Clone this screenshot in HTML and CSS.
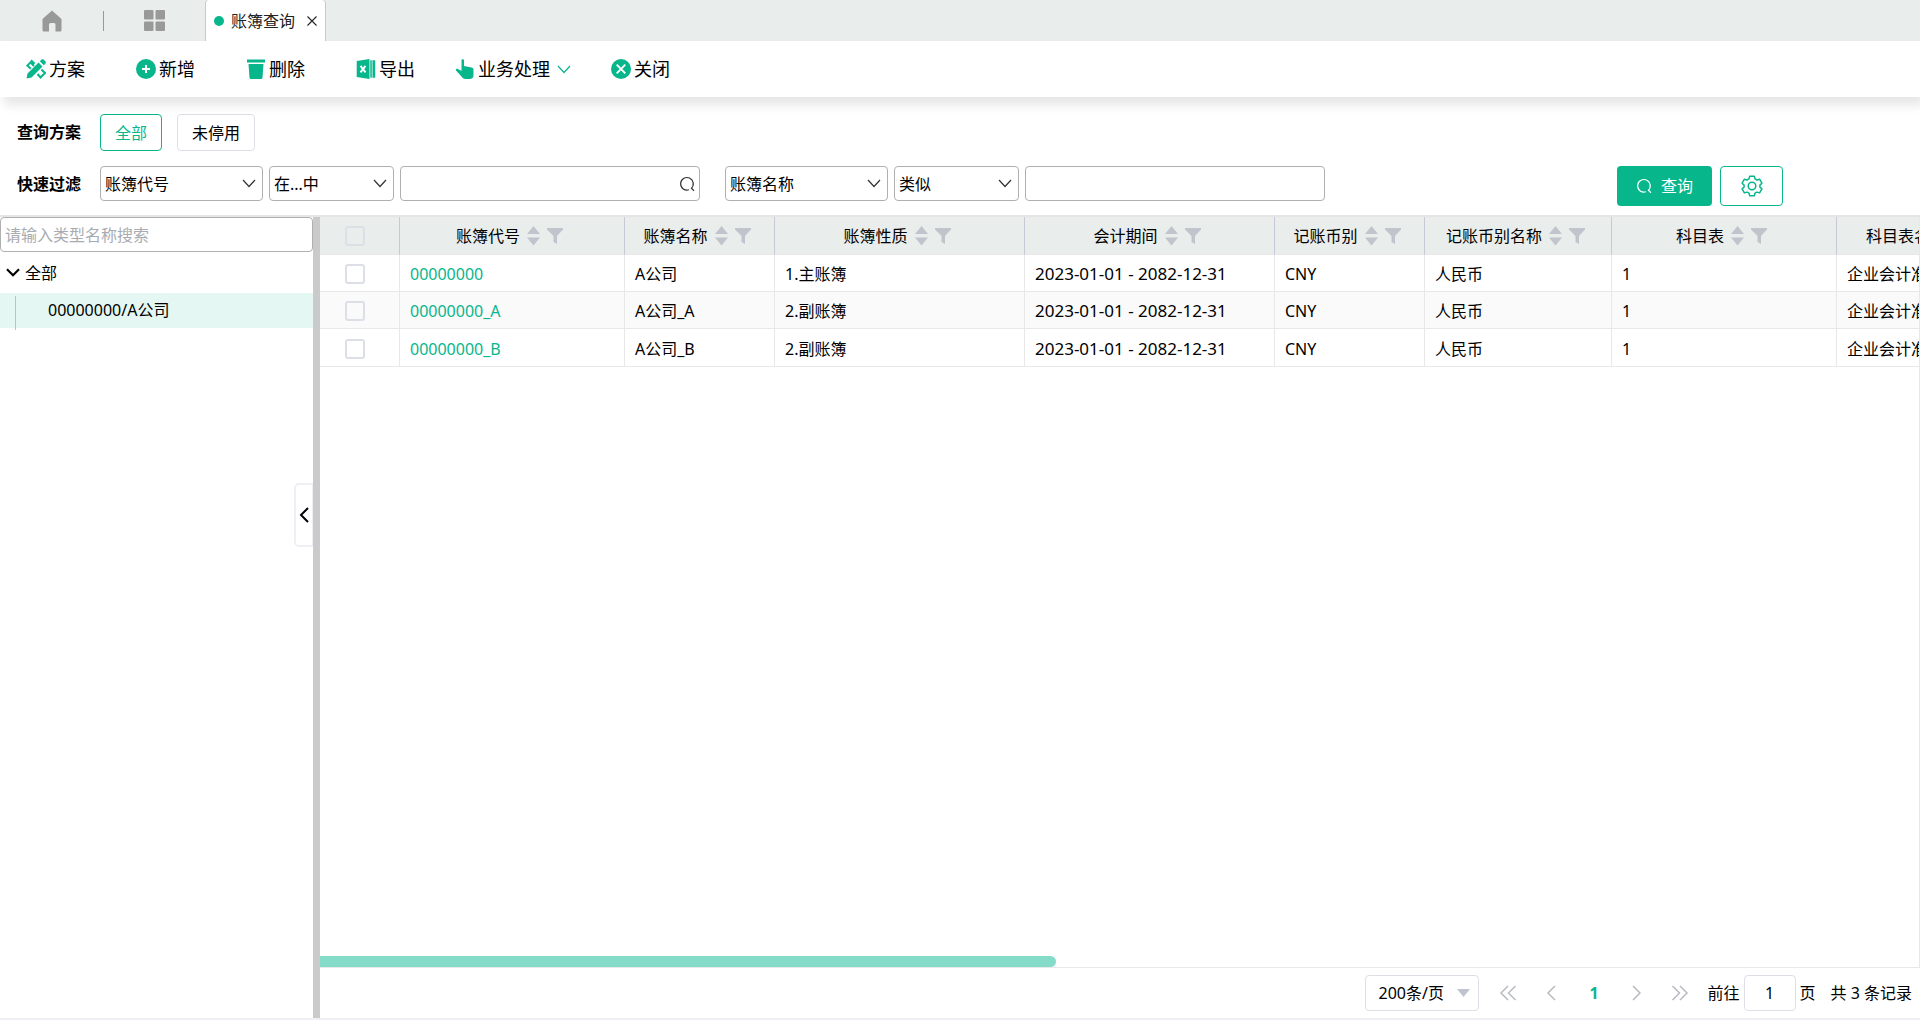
FILE: index.html
```html
<!DOCTYPE html>
<html lang="zh-CN">
<head>
<meta charset="utf-8">
<meta name="viewport" content="width=device-width, initial-scale=1">
<title>账簿查询</title>
<link rel="stylesheet" href="styles.css">
</head>
<body>
<svg class="defs" aria-hidden="true">
  <symbol id="chevron" viewBox="0 0 14 9"><path d="M1 1l6 6.5L13 1" fill="none" stroke="currentColor" stroke-width="1.2"/></symbol>
  <symbol id="search" viewBox="0 0 16 16"><path d="M10 13.8A6.3 6.3 0 1 1 12.4 12.300L15 14.800" fill="none" stroke="currentColor" stroke-width="1.2"/></symbol>
  <symbol id="sort" viewBox="0 0 13 20"><path d="M6.500 0L13 8H0zM0 11.500h13L6.500 19.500z" fill="currentColor"/></symbol>
  <symbol id="funnel" viewBox="0 0 16 16"><path d="M0 0h16v1.500L10 8v8L6.500 14V8L0 1.500z" fill="currentColor"/></symbol>
</svg>

<nav class="tabs">
  <a class="tabs__icon tabs__icon--home" href="#" aria-label="首页">
    <svg width="20" height="22" viewBox="0 0 20 22"><path d="M10 .5L19.500 9v11a1.500 1.500 0 0 1-1.500 1.500h-4.500V14.500a1.500 1.500 0 0 0-1.500-1.500H8.500a1.500 1.500 0 0 0-1.500 1.500v7H2A1.500 1.500 0 0 1 .5 20V9z" fill="#999"/></svg>
  </a>
  <span class="tabs__divider"></span>
  <a class="tabs__icon tabs__icon--grid" href="#" aria-label="应用">
    <svg width="21" height="21" viewBox="0 0 21 21" fill="#999"><rect width="9.500" height="9.500" rx="1"/><rect x="11.500" width="9.500" height="9.500" rx="1"/><rect y="11.500" width="9.500" height="9.500" rx="1"/><rect x="11.500" y="11.500" width="9.500" height="9.500" rx="1"/></svg>
  </a>
  <div class="tab">
    <span class="tab__dot"></span>
    <span class="tab__name">账簿查询</span>
    <button class="tab__close" type="button" aria-label="关闭标签">
      <svg width="10" height="10" viewBox="0 0 10 10"><path d="M.5.5l9 9m0-9l-9 9" stroke="#222" stroke-width="1.100"/></svg>
    </button>
  </div>
</nav>

<div class="toolbar">
  <button class="tool tool--wide" type="button">
    <svg width="20" height="20" viewBox="0 0 20 20">
      <path d="M8 7L4.800 3.600 6.500 1.500 1.300 6.600l3.500 3.200M11.500 15l3 3.500 4.500-4.500-3.600-3.500M5 1.200l3.500 3.500" fill="none" stroke="#08b68c" stroke-width="2"/>
      <path d="M.5 19.500l1-5L12.500 3.500l4 4L5.500 18.500zM13.800 2.300L15.500.6c.7-.6 1.500-.6 2 0l2 2c.5.500.5 1.300 0 1.800l-1.700 1.800z" fill="#08b68c"/>
    </svg>
    <span>方案</span>
  </button>
  <button class="tool tool--wide" type="button">
    <svg width="20" height="20" viewBox="0 0 20 20"><circle cx="10" cy="10" r="10" fill="#08b68c"/><path d="M10 6v8M6 10h8" stroke="#fff" stroke-width="2"/></svg>
    <span>新增</span>
  </button>
  <button class="tool tool--wide" type="button">
    <svg width="20" height="20" viewBox="0 0 20 20"><path d="M1 .5h18v3H1zM2.500 5h15l-1 13.500a1.500 1.500 0 0 1-1.500 1.500H5a1.500 1.500 0 0 1-1.500-1.500z" fill="#08b68c"/></svg>
    <span>删除</span>
  </button>
  <button class="tool" type="button">
    <svg width="20" height="20" viewBox="0 0 20 20"><path d="M.7 2L13.500 0v20L.7 18zM14.300 1.200h1.500v17.600h-1.500zM16.500 1.200h2.700v17.600h-2.700z" fill="#08b68c"/><path d="M4.500 6.800l5 6.500M9.500 6.800l-5 6.500" stroke="#fff" stroke-width="1.900"/></svg>
    <span>导出</span>
  </button>
  <button class="tool" type="button">
    <svg width="20" height="20" viewBox="0 0 20 20"><path d="M6.500 1.300C6.500-.2 9 -.2 9 1.300V7l7.500 1.500c1.300.3 2 1 2 2.200V16c0 2.500-1.500 4-4 4h-4c-2 0-3-1-4-2.500L1 11.500c-.5-1 .7-2.200 2-1.500l3.500 2z" fill="#08b68c"/></svg>
    <span>业务处理</span>
    <svg class="tool__arrow" width="14" height="9"><use href="#chevron"/></svg>
  </button>
  <button class="tool" type="button">
    <svg width="20" height="20" viewBox="0 0 20 20"><circle cx="10" cy="10" r="10" fill="#08b68c"/><path d="M5.700 5.700l8.600 8.600m0-8.600l-8.600 8.600" stroke="#fff" stroke-width="1.900"/></svg>
    <span>关闭</span>
  </button>
</div>

<form class="filters">
  <div class="filters__row">
    <span class="filters__label">查询方案</span>
    <button class="scheme scheme--active" type="button">全部</button>
    <button class="scheme" type="button">未停用</button>
  </div>
  <div class="filters__row">
    <span class="filters__label">快速过滤</span>
    <div class="group">
      <span class="picker picker--field"><select aria-label="过滤字段一"><option>账簿代号</option></select><svg width="14" height="9"><use href="#chevron"/></svg></span>
      <span class="picker picker--op"><select aria-label="过滤条件一"><option>在...中</option></select><svg width="14" height="9"><use href="#chevron"/></svg></span>
      <span class="picker picker--value"><input type="text" aria-label="账簿代号"><svg width="16" height="16"><use href="#search"/></svg></span>
    </div>
    <div class="group">
      <span class="picker picker--field"><select aria-label="过滤字段二"><option>账簿名称</option></select><svg width="14" height="9"><use href="#chevron"/></svg></span>
      <span class="picker picker--op"><select aria-label="过滤条件二"><option>类似</option></select><svg width="14" height="9"><use href="#chevron"/></svg></span>
      <span class="picker picker--value"><input type="text" aria-label="账簿名称"></span>
    </div>
    <div class="actions">
      <button class="btn btn--primary" type="button"><svg width="16" height="16"><use href="#search"/></svg><span>查询</span></button>
      <button class="btn btn--outline" type="button" aria-label="设置">
        <svg width="22" height="22" viewBox="0 0 22 22" fill="none" stroke="#08b68c" stroke-width="1.500" stroke-linejoin="round"><circle cx="11" cy="11" r="3.800"/><path d="M8.700 1.200h4.600l.7 2.700 1.900 1.100 2.700-.8 2.300 4-2 1.900v1.900l2 1.900-2.300 4-2.700-.8-1.900 1.100-.7 2.600H8.700L8 18.200l-1.900-1.100-2.700.8-2.300-4 2-1.900v-1.900l-2-1.900 2.300-4 2.700.8L8 3.900z"/></svg>
      </button>
    </div>
  </div>
</form>

<main class="workspace">
  <aside class="side">
    <input class="side__search" type="text" placeholder="请输入类型名称搜索" aria-label="请输入类型名称搜索">
    <div class="tree">
      <div class="tree__root">
        <svg width="14" height="9" viewBox="0 0 14 9"><path d="M1 1.200l6 6 6-6" fill="none" stroke="#000" stroke-width="2.200"/></svg>
        <span>全部</span>
      </div>
      <div class="tree__leaf">00000000/A公司</div>
    </div>
    <button class="side__fold" type="button" aria-label="收起">
      <svg width="10" height="16" viewBox="0 0 10 16"><path d="M9 1L2 8l7 7" fill="none" stroke="#000" stroke-width="2"/></svg>
    </button>
  </aside>
  <div class="splitter"></div>
  <section class="content">
    <div class="grid">
      <table class="table">
        <colgroup><col class="c80"><col class="c225"><col class="c150"><col class="c250"><col class="c250"><col class="c150"><col class="c187"><col class="c225"><col class="c187"></colgroup>
        <thead>
          <tr>
            <th><input class="check" type="checkbox" aria-label="全选"></th>
            <th><span class="head">账簿代号<svg width="13" height="20"><use href="#sort"/></svg><svg width="16" height="16"><use href="#funnel"/></svg></span></th>
            <th><span class="head">账簿名称<svg width="13" height="20"><use href="#sort"/></svg><svg width="16" height="16"><use href="#funnel"/></svg></span></th>
            <th><span class="head">账簿性质<svg width="13" height="20"><use href="#sort"/></svg><svg width="16" height="16"><use href="#funnel"/></svg></span></th>
            <th><span class="head">会计期间<svg width="13" height="20"><use href="#sort"/></svg><svg width="16" height="16"><use href="#funnel"/></svg></span></th>
            <th><span class="head">记账币别<svg width="13" height="20"><use href="#sort"/></svg><svg width="16" height="16"><use href="#funnel"/></svg></span></th>
            <th><span class="head">记账币别名称<svg width="13" height="20"><use href="#sort"/></svg><svg width="16" height="16"><use href="#funnel"/></svg></span></th>
            <th><span class="head">科目表<svg width="13" height="20"><use href="#sort"/></svg><svg width="16" height="16"><use href="#funnel"/></svg></span></th>
            <th><span class="head">科目表名称<svg width="13" height="20"><use href="#sort"/></svg><svg width="16" height="16"><use href="#funnel"/></svg></span></th>
          </tr>
        </thead>
        <tbody>
          <tr><td class="pick"><input class="check" type="checkbox" aria-label="选择 00000000"></td><td><a href="#">00000000</a></td><td>A公司</td><td>1.主账簿</td><td class="period">2023-01-01 - 2082-12-31</td><td>CNY</td><td>人民币</td><td>1</td><td>企业会计准则</td></tr>
          <tr><td class="pick"><input class="check" type="checkbox" aria-label="选择 00000000_A"></td><td><a href="#">00000000_A</a></td><td>A公司_A</td><td>2.副账簿</td><td class="period">2023-01-01 - 2082-12-31</td><td>CNY</td><td>人民币</td><td>1</td><td>企业会计准则</td></tr>
          <tr><td class="pick"><input class="check" type="checkbox" aria-label="选择 00000000_B"></td><td><a href="#">00000000_B</a></td><td>A公司_B</td><td>2.副账簿</td><td class="period">2023-01-01 - 2082-12-31</td><td>CNY</td><td>人民币</td><td>1</td><td>企业会计准则</td></tr>
        </tbody>
      </table>
      <div class="scroll"><div class="scroll__thumb"></div></div>
    </div>
    <div class="pager">
      <span class="pager__size"><select aria-label="每页条数"><option>200条/页</option></select><svg width="13" height="8" viewBox="0 0 13 8"><path d="M0 0h13L6.500 8z" fill="#c0c4cc"/></svg></span>
      <div class="pager__nav">
        <button type="button" aria-label="首页"><svg width="18" height="16" viewBox="0 0 18 16"><path d="M9 1L2 8l7 7M16.500 1l-7 7 7 7"/></svg></button>
        <button type="button" aria-label="上一页"><svg width="10" height="16" viewBox="0 0 10 16"><path d="M9 1L2 8l7 7"/></svg></button>
        <button class="pager__current" type="button">1</button>
        <button type="button" aria-label="下一页"><svg width="10" height="16" viewBox="0 0 10 16"><path d="M1 1l7 7-7 7"/></svg></button>
        <button type="button" aria-label="末页"><svg width="18" height="16" viewBox="0 0 18 16"><path d="M1.500 1l7 7-7 7M9 1l7 7-7 7"/></svg></button>
      </div>
      <label class="pager__jump">前往<input type="text" value="1" aria-label="页码">页</label>
      <span class="pager__total">共 3 条记录</span>
    </div>
  </section>
</main>
</body>
</html>
```

FILE: styles.css
```css
* { box-sizing: border-box; }

body {
  margin: 0;
  min-height: 100vh;
  display: flex;
  flex-direction: column;
  overflow-x: hidden;
  background: #fff;
  color: #000;
  font: 16px/24px "Noto Sans", "Noto Sans CJK SC", sans-serif;
}

button, input, select {
  margin: 0;
  font: inherit;
  color: inherit;
}

button {
  padding: 0;
  border: 0;
  background: none;
  cursor: pointer;
}

svg { display: block; flex: none; }
.defs { display: none; }

/* Tab strip */
.tabs {
  display: flex;
  align-items: stretch;
  height: 41px;
  background: #e9edec;
}
.tabs__icon { display: flex; align-items: center; justify-content: center; width: 103px; }
.tabs__icon--grid { width: 101px; }
.tabs__divider { width: 1px; height: 20px; align-self: center; background: #999; }

.tab {
  display: flex;
  align-items: center;
  padding: 0 8px;
  border: solid #c4c9c8;
  border-width: 0 1px;
  border-radius: 4px 4px 0 0;
  background: #fff;
}
.tab__dot { width: 10px; height: 10px; margin-right: 7px; border-radius: 50%; background: #08b68c; }
.tab__name { color: #222; }
.tab__close { margin-left: 12px; }

/* Toolbar */
.toolbar {
  position: relative;
  display: flex;
  gap: 40px;
  height: 56px;
  margin-bottom: -1px;
  padding: 0 26px;
  box-shadow: 4px 8px 10px rgba(0, 0, 0, .1);
}
.tool { display: flex; align-items: center; gap: 3px; font-size: 18px; }
.tool--wide { min-width: 70px; }
.tool__arrow { margin-left: 4px; color: #08b68c; }

/* Filters */
.filters {
  display: flex;
  flex-direction: column;
  gap: 15px;
  padding: 18px 137px 9px 17px;
  border-bottom: 2px solid #e5e5e5;
}
.filters__row { display: flex; align-items: flex-start; }
.filters__label { width: 83px; line-height: 37px; font-weight: 700; }

.scheme {
  height: 37px;
  margin-right: 15px;
  padding: 0 14px;
  border: 1px solid #dcdfe6;
  border-radius: 4px;
}
.scheme--active { border-color: #08b68c; color: #08b68c; }

.group { display: flex; gap: 6px; margin-right: 25px; }
.picker { display: grid; align-items: center; }
.picker > * { grid-area: 1 / 1; }
.picker > svg { justify-self: end; margin-right: 7px; color: #333; pointer-events: none; }
.picker--field { width: 163px; }
.picker--op { width: 125px; }
.picker--value { width: 300px; }
.picker--value > svg { margin-right: 5px; }

.picker select, .picker input, .side__search {
  width: 100%;
  height: 35px;
  padding: 0 4px;
  border: 1px solid #b0b0b0;
  border-radius: 4px;
  background: #fff;
  appearance: none;
}

.actions { display: flex; gap: 8px; margin-left: auto; }
.btn { display: flex; align-items: center; justify-content: center; height: 40px; border-radius: 4px; }
.btn--primary { gap: 9px; width: 95px; background: #08b68c; color: #fff; }
.btn--outline { width: 63px; border: 1px solid #08b68c; }

/* Workspace */
.workspace {
  flex: 1;
  display: flex;
  border-bottom: 2px solid #f0eff5;
}
.side { position: relative; width: 313px; flex: none; }
.side__search { display: block; }
.side__search::placeholder { color: #a8abb2; opacity: 1; }
.tree__root { display: flex; align-items: center; gap: 5px; height: 41px; padding-left: 6px; }
.tree__leaf { height: 35px; padding-left: 48px; background: #e4f7f3; line-height: 35px; }
.tree__leaf::before {
  content: "";
  position: absolute;
  left: 15px;
  width: 1px;
  height: 34px;
  margin-top: 3px;
  background: #b9c2c6;
}
.side__fold {
  position: absolute;
  top: 266px;
  right: 0;
  display: flex;
  align-items: center;
  justify-content: center;
  width: 19px;
  height: 64px;
  border: 2px solid #efeff5;
  border-right-width: 1px;
  border-radius: 5px 0 0 5px;
  background: #fff;
}
.splitter { width: 7px; flex: none; background: #cacaca; }
.content { flex: 1; min-width: 0; display: flex; flex-direction: column; }

/* Data grid */
.grid {
  flex: 1;
  display: flex;
  flex-direction: column;
  overflow: hidden;
  border: solid #e8e8e8;
  border-width: 0 1px 1px 0;
}
.table { width: 1704px; table-layout: fixed; border-collapse: separate; border-spacing: 0; }
.c80 { width: 80px; }
.c150 { width: 150px; }
.c187 { width: 187px; }
.c225 { width: 225px; }
.c250 { width: 250px; }
.table th {
  height: 38px;
  padding: 0;
  border-right: 1px solid #c5c9d8;
  border-bottom: 1px solid #e5e8e7;
  background: #e9edec;
  font-weight: 400;
}
.head { display: flex; align-items: center; justify-content: center; padding-right: 5px; color: #000; }
.head svg { margin-left: 7px; color: #c0c4cc; }
.table td {
  height: 37px;
  padding: 2px 10px 0;
  border: solid #e8e8e8;
  border-width: 0 1px 1px 0;
  white-space: nowrap;
  overflow: hidden;
}
.table tbody tr:last-child td { height: 38px; }
.table tbody tr:nth-child(even) { background: #fafafa; }
.table .pick { padding: 2px 0 0; }
.table .period { font-size: 17px; }
.table a { color: #08b68c; text-decoration: none; }
.check {
  display: block;
  width: 20px;
  height: 20px;
  margin: 0 auto 0 25px;
  border: 2px solid #dcdfe6;
  border-radius: 3px;
  appearance: none;
}
.scroll { margin-top: auto; }
.scroll__thumb { width: 46%; height: 11px; border-radius: 0 6px 6px 0; background: #84dbc8; }

/* Pager */
.pager { display: flex; align-items: center; justify-content: flex-end; height: 50px; padding-right: 8px; }
.pager__size { display: grid; align-items: center; width: 114px; }
.pager__size > * { grid-area: 1 / 1; }
.pager__size select {
  height: 36px;
  padding: 0 12px;
  border: 1px solid #dcdfe6;
  border-radius: 4px;
  background: none;
  appearance: none;
}
.pager__size svg { justify-self: end; margin-right: 9px; pointer-events: none; }
.pager__nav { display: flex; margin: 0 6px 0 7px; }
.pager__nav button { display: flex; align-items: center; justify-content: center; width: 43px; height: 36px; }
.pager__nav svg { fill: none; stroke: #b8bbc2; stroke-width: 1.5; }
.pager__nav .pager__current { color: #08b68c; font-weight: 700; }
.pager__jump { display: flex; align-items: center; gap: 4px; }
.pager__jump input {
  width: 52px;
  height: 36px;
  padding: 0;
  border: 1px solid #dcdfe6;
  border-radius: 4px;
  text-align: center;
}
.pager__total { margin-left: 15px; }
```
